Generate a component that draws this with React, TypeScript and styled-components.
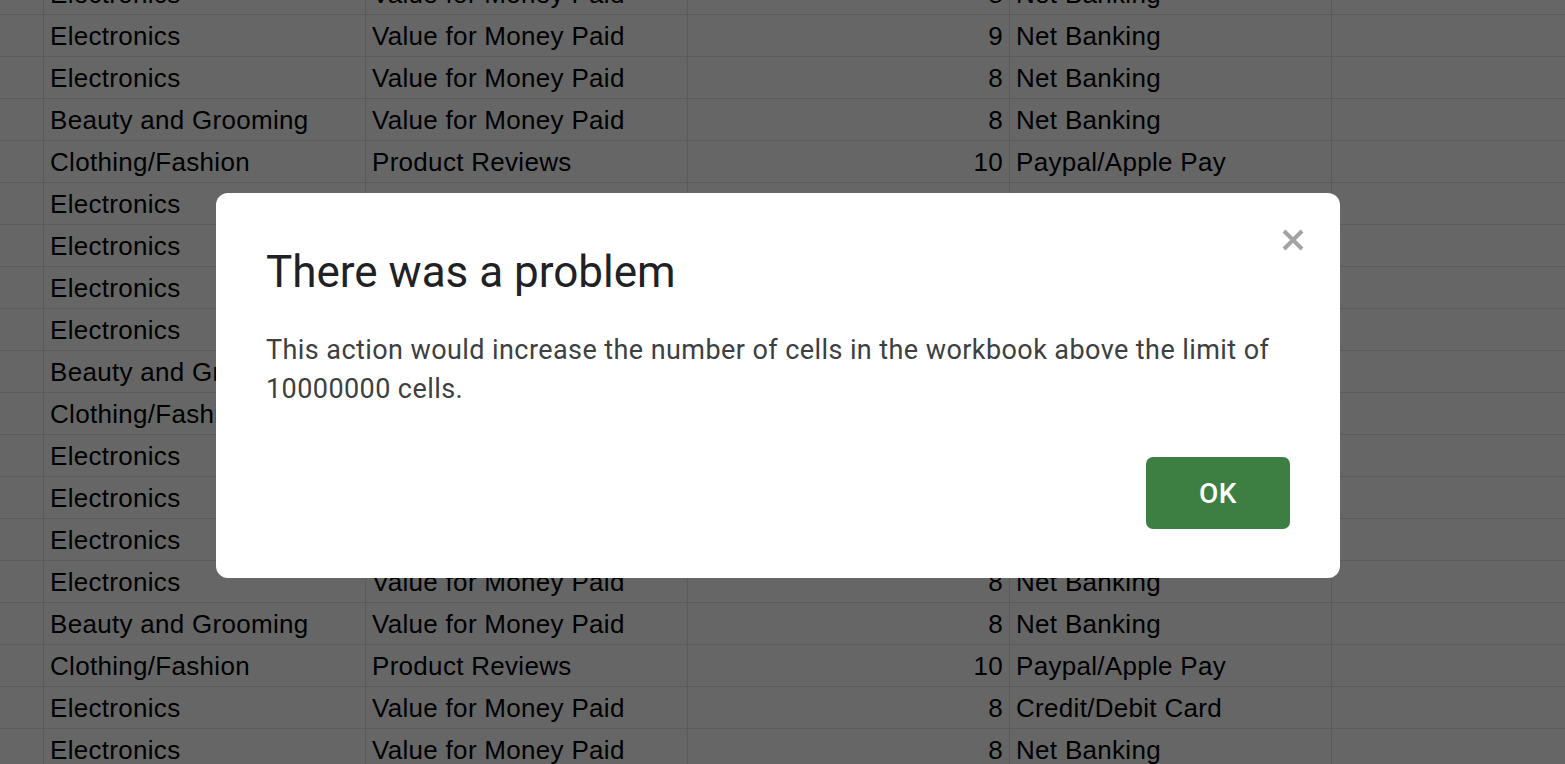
import React from 'react';
import styled, { createGlobalStyle } from 'styled-components';

const GlobalStyle = createGlobalStyle`
  html, body {
    margin: 0;
    padding: 0;
    background: #ffffff;
    overflow: hidden;
  }
`;

type Row = [string, string, string, string];

const rows: Row[] = [
  ['Electronics', 'Value for Money Paid', '8', 'Net Banking'],
  ['Electronics', 'Value for Money Paid', '9', 'Net Banking'],
  ['Electronics', 'Value for Money Paid', '8', 'Net Banking'],
  ['Beauty and Grooming', 'Value for Money Paid', '8', 'Net Banking'],
  ['Clothing/Fashion', 'Product Reviews', '10', 'Paypal/Apple Pay'],
  ['Electronics', 'Value for Money Paid', '8', 'Net Banking'],
  ['Electronics', 'Product Reviews', '9', 'Credit/Debit Card'],
  ['Electronics', 'Value for Money Paid', '8', 'Net Banking'],
  ['Electronics', 'Value for Money Paid', '9', 'Net Banking'],
  ['Beauty and Grooming', 'Value for Money Paid', '8', 'Net Banking'],
  ['Clothing/Fashion', 'Product Reviews', '10', 'Paypal/Apple Pay'],
  ['Electronics', 'Value for Money Paid', '8', 'Credit/Debit Card'],
  ['Electronics', 'Value for Money Paid', '8', 'Net Banking'],
  ['Electronics', 'Value for Money Paid', '9', 'Net Banking'],
  ['Electronics', 'Value for Money Paid', '8', 'Net Banking'],
  ['Beauty and Grooming', 'Value for Money Paid', '8', 'Net Banking'],
  ['Clothing/Fashion', 'Product Reviews', '10', 'Paypal/Apple Pay'],
  ['Electronics', 'Value for Money Paid', '8', 'Credit/Debit Card'],
  ['Electronics', 'Value for Money Paid', '8', 'Net Banking'],
];

export default function App() {
  return (
    <>
      <GlobalStyle />
      <Sheet>
        {rows.map((row, i) => (
          <React.Fragment key={i}>
            <Cell />
            <Cell>{row[0]}</Cell>
            <Cell>{row[1]}</Cell>
            <Cell $numeric>{row[2]}</Cell>
            <Cell>{row[3]}</Cell>
            <Cell $last />
          </React.Fragment>
        ))}
      </Sheet>

      <Overlay>
        <Dialog role="alertdialog" aria-labelledby="dlg-title">
          <CloseButton aria-label="Close">
            <svg width="26" height="26" viewBox="0 0 26 26">
              <path
                d="M4 4 L22 22 M22 4 L4 22"
                stroke="#a3a3a3"
                strokeWidth="4"
                strokeLinecap="butt"
                fill="none"
              />
            </svg>
          </CloseButton>
          <Title id="dlg-title">There was a problem</Title>
          <Message>
            This action would increase the number of cells in the workbook above the limit of
            10000000 cells.
          </Message>
          <Actions>
            <OkButton>OK</OkButton>
          </Actions>
        </Dialog>
      </Overlay>
    </>
  );
}

const Sheet = styled.div`
  display: grid;
  grid-template-columns: 44px repeat(4, 322px) 1fr;
  grid-auto-rows: 42px;
  margin-top: -27px;
  font-family: 'Liberation Sans', Arial, sans-serif;
  font-size: 26px;
  letter-spacing: 0.3px;
  color: #000000;
`;

const Cell = styled.div<{ $numeric?: boolean; $last?: boolean }>`
  box-sizing: border-box;
  height: 42px;
  line-height: 39px;
  padding: 2px 6px 0;
  border-bottom: 1px solid #e2e3e3;
  border-right: ${({ $last }) => ($last ? 'none' : '1px solid #e2e3e3')};
  text-align: ${({ $numeric }) => ($numeric ? 'right' : 'left')};
  white-space: nowrap;
  overflow: hidden;
`;

const Overlay = styled.div`
  position: fixed;
  inset: 0;
  background: rgba(0, 0, 0, 0.6);
  display: flex;
  align-items: flex-start;
  justify-content: flex-start;
  padding: 193px 0 0 216px;
`;

const Dialog = styled.div`
  position: relative;
  box-sizing: border-box;
  width: 1124px;
  padding: 53px 50px 49px 50px;
  background: #ffffff;
  border-radius: 12px;
  display: flex;
  flex-direction: column;
`;

const CloseButton = styled.button`
  position: absolute;
  top: 34px;
  right: 34px;
  width: 26px;
  height: 26px;
  padding: 0;
  border: none;
  background: none;
  display: flex;
  cursor: pointer;
  filter: blur(0.5px);
`;

const Title = styled.h1`
  margin: 0;
  font-family: Roboto, 'Noto Sans', sans-serif;
  font-weight: 400;
  font-size: 44px;
  line-height: 52px;
  color: #202124;
`;

const Message = styled.p`
  margin: 33px 0 0;
  font-family: Roboto, 'Noto Sans', sans-serif;
  font-size: 27px;
  letter-spacing: 0.42px;
  line-height: 39px;
  color: #3c4043;
`;

const Actions = styled.div`
  display: flex;
  justify-content: flex-end;
  margin-top: 48px;
`;

const OkButton = styled.button`
  width: 144px;
  height: 72px;
  border: none;
  border-radius: 7px;
  background: #3d7f42;
  color: #ffffff;
  font-family: Roboto, 'Noto Sans', sans-serif;
  font-weight: 500;
  font-size: 28px;
  letter-spacing: 0.5px;
  cursor: pointer;
`;
